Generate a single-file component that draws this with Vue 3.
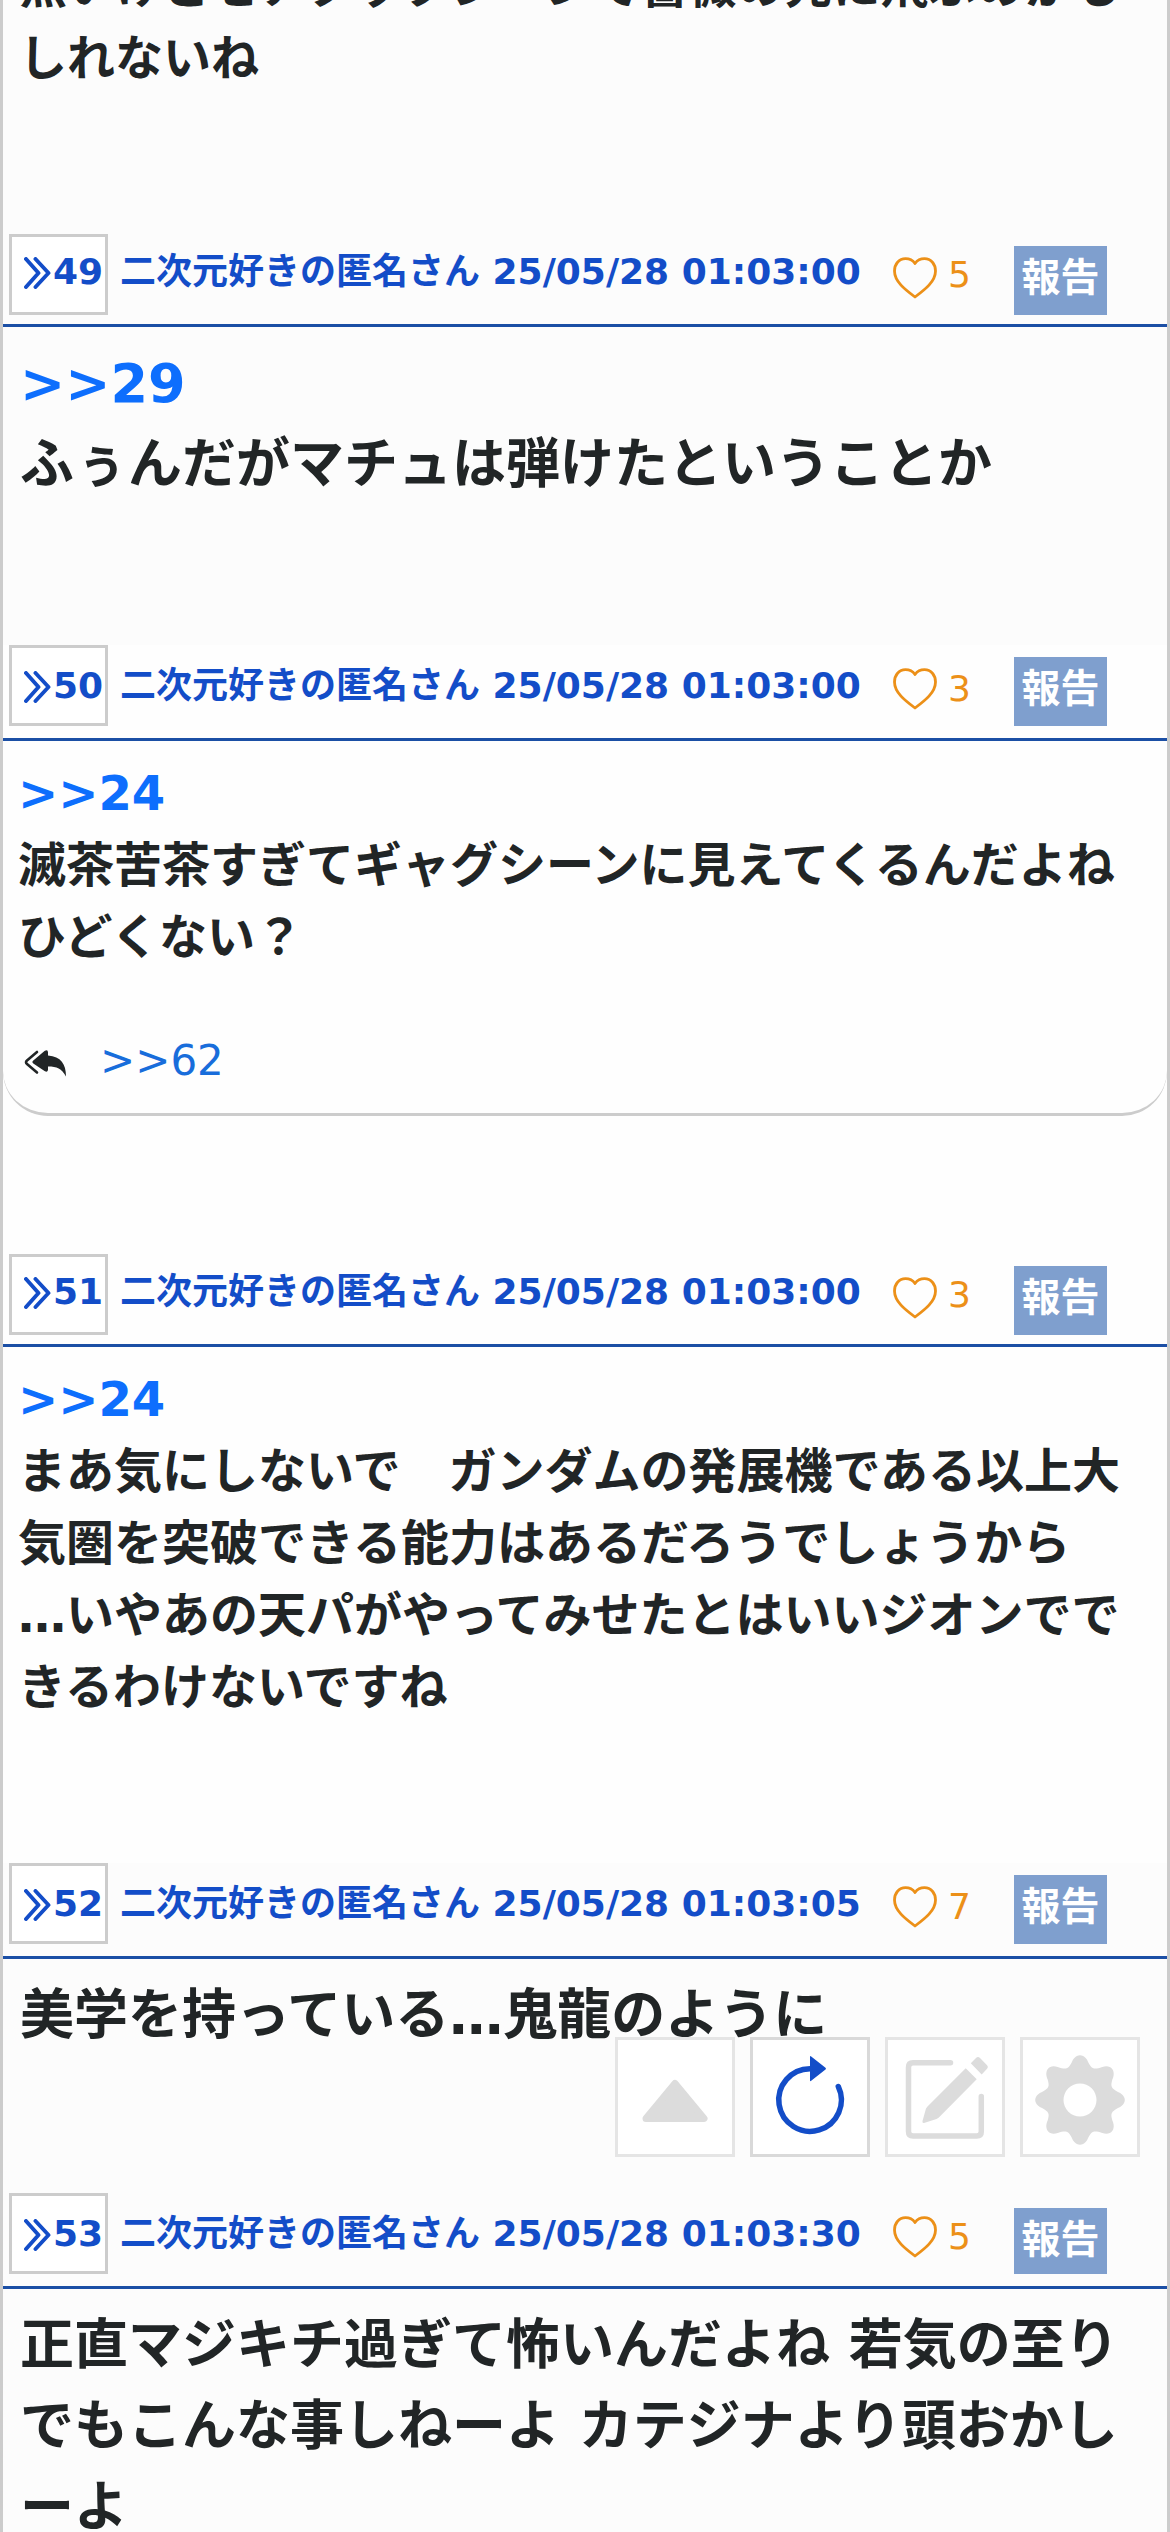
<script setup>
const firstPost = ['無いけどセアタックシーンで薔薇の先に飛ぶのかも', 'しれないね']
const posts = [
  { no: 49, time: '01:03:00', likes: 5, snug: true, large: true, quote: '>>29', lines: ['ふぅんだがマチュは弾けたということか'] },
  { no: 50, time: '01:03:00', likes: 3, quote: '>>24', lines: ['滅茶苦茶すぎてギャグシーンに見えてくるんだよね', 'ひどくない？'], reply: '>>62' },
  { no: 51, time: '01:03:00', likes: 3, snug: true, quote: '>>24', lines: ['まあ気にしないで　ガンダムの発展機である以上大', '気圏を突破できる能力はあるだろうでしょうから', '…いやあの天パがやってみせたとはいいジオンでで', 'きるわけないですね'] },
  { no: 52, time: '01:03:05', likes: 7, large: true, compact: true, lines: ['美学を持っている…鬼龍のように'] },
  { no: 53, time: '01:03:30', likes: 5, large: true, short: true, lines: ['正直マジキチ過ぎて怖いんだよね 若気の至り', 'でもこんな事しねーよ カテジナより頭おかし', 'ーよ'] },
]

const gear = (() => {
  const pts = []
  for (let i = 0; i < 360; i += 2) {
    const t = (i * Math.PI) / 180
    const c = Math.cos(8 * t)
    const r = 39.6 + 5.2 * Math.sign(c) * Math.pow(Math.abs(c), 0.85)
    pts.push(`${(60 + r * Math.cos(t)).toFixed(2)} ${(63 + r * Math.sin(t)).toFixed(2)}`)
  }
  return `M${pts.join('L')}Z M60 46.5a16.5 16.5 0 1 0 0 33a16.5 16.5 0 1 0 0 -33Z`
})()
</script>

<template>
  <main class="thread">
    <section class="post lead">
      <div class="body">
        <p v-for="line in firstPost" :key="line">{{ line }}</p>
      </div>
    </section>

    <section v-for="p in posts" :key="p.no" class="post" :class="{ snug: p.snug, large: p.large, compact: p.compact, short: p.short, replied: p.reply }">
      <header class="head">
        <a class="num">
          <svg class="chev" width="27" height="32" viewBox="0 0 27 32"><path d="M2 2L14.5 16L2 30M11.5 2L24.5 16L11.5 30" /></svg>
          <span>{{ p.no }}</span>
        </a>
        <span class="name">二次元好きの匿名さん 25/05/28 {{ p.time }}</span>
        <svg class="heart" width="44" height="42" viewBox="0 0 44 42"><path d="M22 6.5C19.5 3 16 1.7 12.5 1.7C6 1.7 1.5 7 1.5 14C1.5 24.5 12 32.5 22 40C32 32.5 42.5 24.5 42.5 14C42.5 7 38 1.7 31.5 1.7C28 1.7 24.5 3 22 6.5Z" /></svg>
        <span class="likes">{{ p.likes }}</span>
        <button class="report">報告</button>
      </header>
      <div class="body">
        <a v-if="p.quote" class="quote">{{ p.quote }}</a>
        <p v-for="line in p.lines" :key="line">{{ line }}</p>
        <div v-if="p.reply" class="reply">
          <svg width="43" height="27" viewBox="0 0 43 27">
            <path class="outline" d="M13 2L3 10.5Q1 12.3 3 14L13 22.5" />
            <path class="fill" d="M9.3 10.4L20.5 1Q24 -0.8 24 2.5V5.5C37 6.5 42 14 42 26.5C37.5 18.5 33 16.5 24 16.5V19.5Q24 22.8 20.5 21L9.3 13.4Q7.5 11.9 9.3 10.4Z" />
          </svg>
          <a>{{ p.reply }}</a>
        </div>
      </div>
    </section>

    <nav class="tools">
      <button class="tool"><svg viewBox="0 0 120 120"><path class="solid round" d="M60 46.5L89 81.5H31Z" /></svg></button>
      <button class="tool active"><svg viewBox="0 0 120 120"><path class="stroke" d="M60 31.7A31.3 31.3 0 1 0 88.3 49.5" /><path class="solid" d="M60 20Q60 18.5 61.2 19.5L75.5 30.8Q76.5 31.7 75.5 32.6L61.2 43.8Q60 44.7 60 43.2Z" /></svg></button>
      <button class="tool"><svg viewBox="0 0 120 120"><path class="stroke" d="M65.5 25.8H28Q23.5 25.8 23.5 30.3V94.5Q23.5 99 28 99H91.8Q96.3 99 96.3 94.5V59.5" /><path class="solid" d="M37.5 84L41 71.5L42.5 69.5L80.7 31.3L91.7 42.3L53.6 80.7L51.5 82L39 86Q37 86.3 37.5 84ZM85.8 26.3L91 21Q93 19 95 21L101.8 28Q103.8 30 101.8 32L96.7 37.5Z" /></svg></button>
      <button class="tool"><svg viewBox="0 0 120 120"><path class="solid" fill-rule="evenodd" :d="gear" /></svg></button>
    </nav>
  </main>
</template>

<style>
body { margin: 0; }
</style>

<style scoped>
.thread {
  position: relative;
  box-sizing: border-box;
  width: 1170px;
  height: 2532px;
  overflow: hidden;
  border: solid #ccc;
  border-width: 0 3px;
  background: #fcfcfc;
  color: #212526;
  font-family: "DejaVu Sans", "Noto Sans CJK JP", sans-serif;
}
p { margin: 0; white-space: nowrap; }
.body {
  box-sizing: border-box;
  padding: 16px 0 140px 15px;
  font-size: 48px;
  font-weight: 700;
  line-height: 72px;
}
.lead { display: flow-root; height: 234px; }
.lead .body { margin-top: -50px; padding: 0 0 0 16px; }
.large .body { padding-left: 17px; font-size: 54px; line-height: 81px; }
.compact .body { padding-bottom: 137px; }
.replied .body {
  height: 375px;
  margin-bottom: 138px;
  padding-bottom: 0;
  border-bottom: 3px solid #ccc;
  border-radius: 0 0 45px 45px;
}
.replied, .snug:not(.large) { background: #fefefe; }
.replied { display: flow-root; }
.head {
  display: flex;
  box-sizing: border-box;
  height: 96px;
  padding-left: 6px;
  align-items: flex-start;
  border-bottom: 3px solid #1b4fa5;
  color: #134dc8;
  font-size: 36px;
  font-weight: 700;
  line-height: 36px;
}
.snug .head { height: 93px; }
.num {
  display: flex;
  box-sizing: border-box;
  width: 99px;
  height: 81px;
  padding: 20px 0 0 12px;
  border: 3px solid #ccc;
  background: #fff;
}
.snug .num { padding-top: 17px; }
.chev { flex: none; margin-top: 3px; }
.chev path { fill: none; stroke: #134dc8; stroke-width: 3.9; stroke-linecap: round; stroke-linejoin: round; }
.num span { margin-left: 2px; }
.name { width: 773px; margin: 23px 0 0 12px; white-space: nowrap; }
.snug .name { margin-top: 20px; }
.heart { flex: none; margin: 23px 0 0; }
.heart path { fill: none; stroke: #ec9018; stroke-width: 2.8; stroke-linejoin: round; }
.likes { width: 66px; margin: 26px 0 0 11px; color: #ec9018; font-weight: 400; }
.snug .likes { margin-top: 23px; }
.report {
  width: 93px;
  height: 69px;
  margin: 12px 0 0;
  padding: 0 0 6px;
  border: 0;
  background: #7f9fce;
  color: #fff;
  font: 700 39px/63px "DejaVu Sans", "Noto Sans CJK JP", sans-serif;
}
.short .report { height: 66px; margin-top: 15px; padding-bottom: 3px; }
.quote { display: block; color: #0d6efd; }
.reply { display: flex; align-items: center; height: 63px; margin: 56px 0 0 6px; }
.reply svg { margin-top: 6px; }
.reply .outline { fill: none; stroke: #212526; stroke-width: 2.6; stroke-linecap: round; }
.reply .fill { fill: #212526; }
.reply a { margin-left: 33px; color: #186ddb; font-size: 42px; font-weight: 400; line-height: 63px; }
.tools { position: absolute; right: 27px; bottom: 375px; display: flex; gap: 15px; }
.tool {
  box-sizing: border-box;
  width: 120px;
  height: 120px;
  padding: 0;
  border: 3px solid #e5e5e5;
  background: #fff;
  color: #dcdcdc;
}
.tool svg { display: block; width: 120px; height: 120px; margin: -3px; }
.tool.active { border-color: #d9d9d9; color: #134dc8; }
.solid { fill: currentColor; }
.round { stroke: currentColor; stroke-width: 7; stroke-linejoin: round; }
.stroke { fill: none; stroke: currentColor; stroke-width: 5.5; stroke-linecap: round; }
</style>
